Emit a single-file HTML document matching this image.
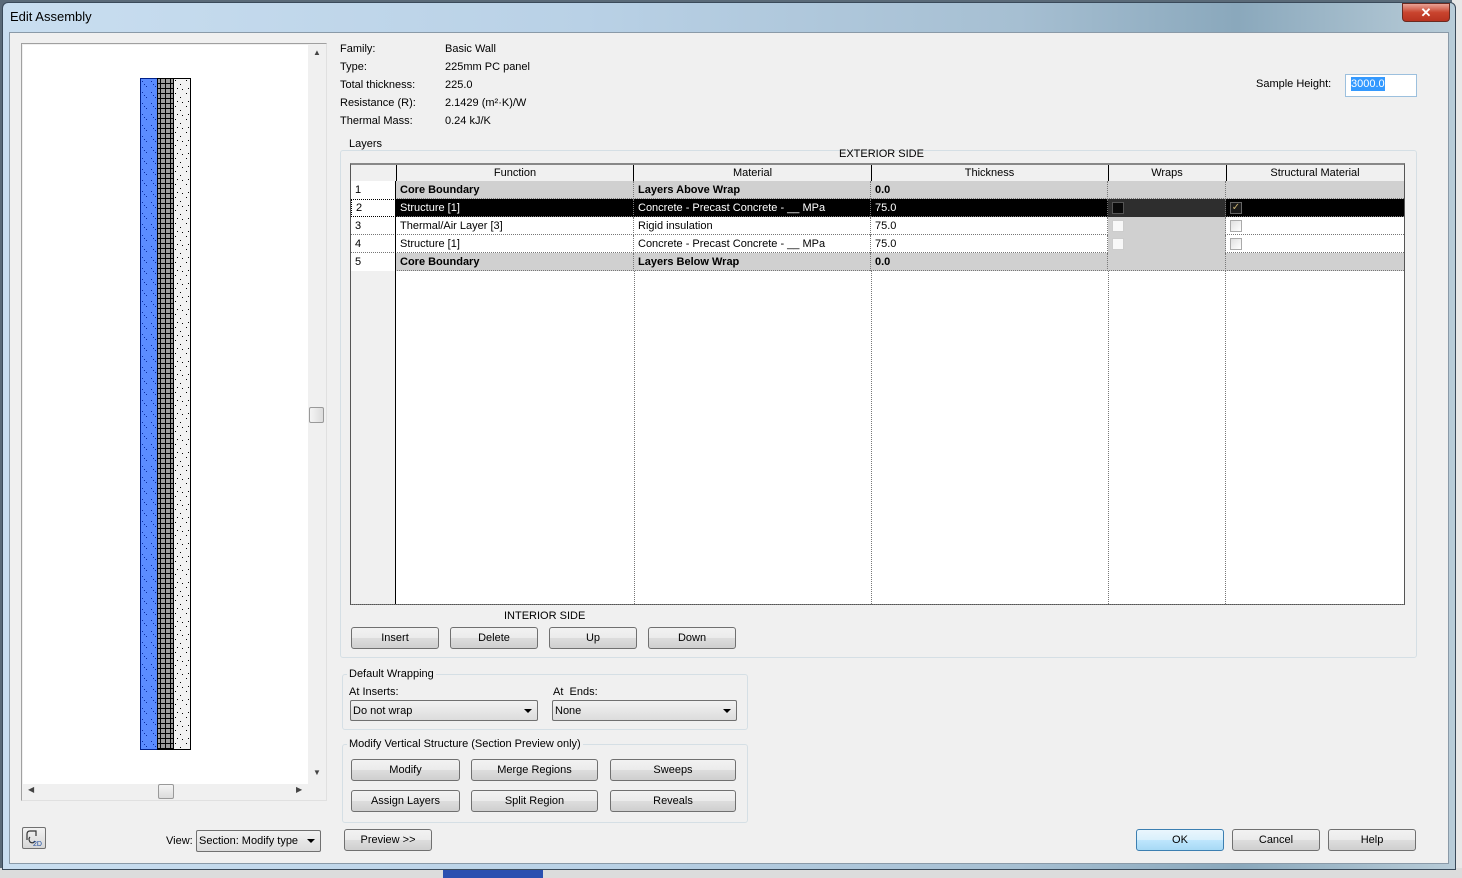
<!DOCTYPE html>
<html><head><meta charset="utf-8"><style>
*{box-sizing:border-box;margin:0;padding:0}
body{width:1462px;height:878px;overflow:hidden;background:#5a6a78;font-family:"Liberation Sans",sans-serif;font-size:11px;color:#000;position:relative}
.a{position:absolute;white-space:nowrap}
.btn{position:absolute;height:22px;border:1px solid #707070;border-radius:3px;background:linear-gradient(#f2f2f2 0,#ebebeb 50%,#dddddd 51%,#cfcfcf 100%);text-align:center;line-height:21px;font-size:11px}
.grp{position:absolute;border:1px solid #d5dfe5;border-radius:3px}
.lgd{position:absolute;background:#f0f0f0;padding:0 2px;font-size:11px}
.sel{position:absolute;height:21px;border:1px solid #707070;border-radius:2px;background:linear-gradient(#f2f2f2,#dcdcdc);line-height:20px;padding-left:2px;font-size:11px}
.sel:after{content:"";position:absolute;right:5px;top:8px;border-left:4px solid transparent;border-right:4px solid transparent;border-top:4px solid #000}
.row{position:absolute;left:351px;width:1053px;height:18px;border-bottom:1px dotted #777}
.c{position:absolute;top:0;height:18px;line-height:19px;padding-left:4px;border-right:1px dotted #777}
.cb{position:absolute;width:12px;height:12px;border:1px solid #aaa;background:linear-gradient(135deg,#e0e0e0,#fff)}
</style></head><body>
<div class="a" style="left:1452px;top:0;width:10px;height:878px;background:#e8e8e8"></div>
<div class="a" style="left:0;top:868px;width:1462px;height:10px;background:#dcdcdc"></div>
<div class="a" style="left:443px;top:866px;width:100px;height:12px;background:#2a4fb0"></div>
<div class="a" style="left:2px;top:2px;width:1454px;height:868px;border:1px solid #3a4a5a;border-radius:6px 6px 0 0;background:linear-gradient(90deg,#c9def0 0%,#b9d1e6 40%,#a6bfd2 70%,#8aa8bc 85%,#b8ccd8 100%)"></div>
<div class="a" style="left:10px;top:9px;font-size:13px">Edit Assembly</div>
<div class="a" style="left:1402px;top:3px;width:48px;height:19px;border:1px solid #6b2a20;border-radius:0 0 4px 4px;background:linear-gradient(#e8a396,#c9442e 50%,#b83320);color:#fff;text-align:center;font-weight:bold;font-size:13px;line-height:17px">✕</div>
<div class="a" style="left:9px;top:32px;width:1440px;height:832px;background:#f0f0f0;border:1px solid #8a9aa8"></div>

<div class="a" style="left:21px;top:43px;width:306px;height:758px;border:1px solid #a0a0a0;border-right-color:#e0e0e0;border-bottom-color:#e0e0e0;background:#f0f0f0"></div>
<div class="a" style="left:23px;top:45px;width:285px;height:739px;background:#fff"></div>
<div class="a" style="left:313px;top:48px;font-size:8px;color:#444">▲</div>
<div class="a" style="left:313px;top:768px;font-size:8px;color:#444">▼</div>
<div class="a" style="left:309px;top:407px;width:15px;height:16px;border:1px solid #999;border-radius:2px;background:linear-gradient(90deg,#f4f4f4,#dcdcdc)"></div>
<div class="a" style="left:28px;top:785px;font-size:8px;color:#444">◀</div>
<div class="a" style="left:296px;top:785px;font-size:8px;color:#444">▶</div>
<div class="a" style="left:158px;top:784px;width:16px;height:15px;border:1px solid #999;border-radius:2px;background:linear-gradient(#f4f4f4,#dcdcdc)"></div>
<svg class="a" style="left:140px;top:78px" width="51" height="672">
<defs>
<pattern id="bl" width="9" height="11" patternUnits="userSpaceOnUse"><rect width="9" height="11" fill="#5b8cff"/><rect x="2" y="3" width="1" height="1" fill="#0a2aa0"/><rect x="6" y="8" width="1" height="1" fill="#0a2aa0"/><rect x="4" y="6" width="1" height="1" fill="#0a2aa0"/></pattern>
<pattern id="gr" width="5" height="5" patternUnits="userSpaceOnUse"><rect width="5" height="5" fill="#000"/><rect x="1" y="1" width="4" height="4" fill="#9c9c9c"/></pattern>
<pattern id="sp" width="11" height="13" patternUnits="userSpaceOnUse"><rect width="11" height="13" fill="#f2f2f2"/><rect x="2" y="2" width="1" height="1" fill="#000"/><rect x="7" y="6" width="1" height="1" fill="#000"/><rect x="4" y="10" width="1" height="1" fill="#000"/><rect x="9" y="11" width="1" height="1" fill="#000"/></pattern>
</defs>
<rect x="0.5" y="0.5" width="17" height="671" fill="url(#bl)" stroke="#00208a"/>
<rect x="17.5" y="0.5" width="16" height="671" fill="url(#gr)" stroke="#000"/>
<rect x="33.5" y="0.5" width="17" height="671" fill="url(#sp)" stroke="#000"/>
</svg>

<div class="a" style="left:340px;top:40px;line-height:18px">Family:<br>Type:<br>Total thickness:<br>Resistance (R):<br>Thermal Mass:</div>
<div class="a" style="left:445px;top:40px;line-height:18px">Basic Wall<br>225mm PC panel<br>225.0<br>2.1429 (m²·K)/W<br>0.24 kJ/K</div>
<div class="a" style="left:1256px;top:78px">Sample Height:</div>
<div class="a" style="left:1345px;top:74px;width:72px;height:23px;border:1px solid #9cc0de;background:#fff"></div>
<div class="a" style="left:1351px;top:77px;background:#3399ff;color:#fff;line-height:14px">3000.0</div>

<div class="grp" style="left:340px;top:150px;width:1077px;height:508px"></div>
<div class="lgd" style="left:347px;top:138px">Layers</div>
<div class="a" style="left:839px;top:148px">EXTERIOR SIDE</div>
<div class="a" style="left:350px;top:163px;width:1055px;height:442px;border:1px solid #555;border-top:2px solid #888;background:#fff"></div>
<div class="a" style="left:351px;top:271px;width:45px;height:333px;background:#f0f0f0;border-right:1px solid #000"></div>
<div class="a" style="left:634px;top:271px;height:333px;border-left:1px dotted #777"></div>
<div class="a" style="left:871px;top:271px;height:333px;border-left:1px dotted #777"></div>
<div class="a" style="left:1108px;top:271px;width:118px;height:333px;border-left:1px dotted #777;border-right:1px dotted #777"></div>
<div class="a" style="left:351px;top:604px;width:1053px;border-top:1px dotted #777"></div>
<div class="a" style="left:351px;top:165px;width:1053px;height:17px;background:#f0f0f0;border-bottom:1px solid #000"></div>
<div class="a" style="left:396px;top:165px;width:238px;height:17px;border-left:1px solid #000;border-right:1px solid #000;text-align:center;line-height:17px">Function</div>
<div class="a" style="left:634px;top:165px;width:238px;height:17px;border-right:1px solid #000;text-align:center;line-height:17px">Material</div>
<div class="a" style="left:871px;top:165px;width:238px;height:17px;border-right:1px solid #000;text-align:center;line-height:17px">Thickness</div>
<div class="a" style="left:1108px;top:165px;width:119px;height:17px;border-right:1px solid #000;text-align:center;line-height:17px">Wraps</div>
<div class="a" style="left:1226px;top:165px;width:178px;height:17px;text-align:center;line-height:17px">Structural Material</div>
<div class="row" style="top:181px;background:#d0d0d0;font-weight:bold"><div class="c" style="left:0;width:45px;background:#fff;font-weight:normal;border-right:1px solid #000">1</div><div class="c" style="left:45px;width:238px">Core Boundary</div><div class="c" style="left:283px;width:237px">Layers Above Wrap</div><div class="c" style="left:520px;width:237px">0.0</div><div class="c" style="left:757px;width:118px"></div></div>
<div class="row" style="top:199px;background:#000;color:#fff"><div class="c" style="left:0;width:45px;background:#fff;color:#000;border:1px dotted #000;border-right:1px solid #000;line-height:17px">2</div><div class="c" style="left:45px;width:238px">Structure [1]</div><div class="c" style="left:283px;width:237px">Concrete - Precast Concrete - __ MPa</div><div class="c" style="left:520px;width:237px">75.0</div><div class="c" style="left:757px;width:118px;background:#2e2e2e"></div><div class="cb" style="left:761px;top:3px;background:#0a0a0a;border-color:#555"></div><div class="cb" style="left:879px;top:3px;background:#1a1a1a;border-color:#666;color:#c8b070;font-size:10px;line-height:10px;text-align:center">✓</div></div>
<div class="row" style="top:217px;background:#fff"><div class="c" style="left:0;width:45px;border-right:1px solid #000">3</div><div class="c" style="left:45px;width:238px">Thermal/Air Layer [3]</div><div class="c" style="left:283px;width:237px">Rigid insulation</div><div class="c" style="left:520px;width:237px">75.0</div><div class="c" style="left:757px;width:118px;background:#d0d0d0"></div><div class="cb" style="left:761px;top:3px;background:#f8f8f8;border-color:#ccc"></div><div class="cb" style="left:879px;top:3px"></div></div>
<div class="row" style="top:235px;background:#fff"><div class="c" style="left:0;width:45px;border-right:1px solid #000">4</div><div class="c" style="left:45px;width:238px">Structure [1]</div><div class="c" style="left:283px;width:237px">Concrete - Precast Concrete - __ MPa</div><div class="c" style="left:520px;width:237px">75.0</div><div class="c" style="left:757px;width:118px;background:#d0d0d0"></div><div class="cb" style="left:761px;top:3px;background:#f8f8f8;border-color:#ccc"></div><div class="cb" style="left:879px;top:3px"></div></div>
<div class="row" style="top:253px;background:#d0d0d0;font-weight:bold"><div class="c" style="left:0;width:45px;background:#fff;font-weight:normal;border-right:1px solid #000">5</div><div class="c" style="left:45px;width:238px">Core Boundary</div><div class="c" style="left:283px;width:237px">Layers Below Wrap</div><div class="c" style="left:520px;width:237px">0.0</div><div class="c" style="left:757px;width:118px"></div></div>

<div class="a" style="left:504px;top:610px">INTERIOR SIDE</div>
<div class="btn" style="left:351px;top:627px;width:88px">Insert</div>
<div class="btn" style="left:450px;top:627px;width:88px">Delete</div>
<div class="btn" style="left:549px;top:627px;width:88px">Up</div>
<div class="btn" style="left:648px;top:627px;width:88px">Down</div>

<div class="grp" style="left:342px;top:674px;width:406px;height:56px"></div>
<div class="lgd" style="left:347px;top:668px">Default Wrapping</div>
<div class="a" style="left:349px;top:686px">At Inserts:</div>
<div class="a" style="left:553px;top:686px">At&nbsp; Ends:</div>
<div class="sel" style="left:350px;top:700px;width:188px">Do not wrap</div>
<div class="sel" style="left:552px;top:700px;width:185px">None</div>

<div class="grp" style="left:342px;top:744px;width:406px;height:79px"></div>
<div class="lgd" style="left:347px;top:738px">Modify Vertical Structure (Section Preview only)</div>
<div class="btn" style="left:351px;top:759px;width:109px">Modify</div>
<div class="btn" style="left:471px;top:759px;width:127px">Merge Regions</div>
<div class="btn" style="left:610px;top:759px;width:126px">Sweeps</div>
<div class="btn" style="left:351px;top:790px;width:109px">Assign Layers</div>
<div class="btn" style="left:471px;top:790px;width:127px">Split Region</div>
<div class="btn" style="left:610px;top:790px;width:126px">Reveals</div>

<div class="a" style="left:22px;top:827px;width:24px;height:22px;border:1px solid #707070;border-radius:2px;background:linear-gradient(#f2f2f2,#d6d6d6)"><svg width="22" height="20"><path d="M4 12 V6 Q4 3 7 3 H13 V8 M7 9 Q5 11 7 14 Q10 16 12 13" fill="none" stroke="#333" stroke-width="1.2"/><text x="10" y="18" font-size="7" fill="#1a4aa0" font-family="Liberation Sans">2D</text></svg></div>
<div class="a" style="left:166px;top:835px">View:</div>
<div class="sel" style="left:196px;top:830px;width:125px;height:22px;line-height:21px">Section: Modify type</div>
<div class="btn" style="left:344px;top:829px;width:88px">Preview &gt;&gt;</div>
<div class="btn" style="left:1136px;top:829px;width:88px;border-color:#3c7fb1;background:linear-gradient(#eaf6fd,#d9f0fc 50%,#bee6fd 51%,#a7d9f5)">OK</div>
<div class="btn" style="left:1232px;top:829px;width:88px">Cancel</div>
<div class="btn" style="left:1328px;top:829px;width:88px">Help</div>
</body></html>
